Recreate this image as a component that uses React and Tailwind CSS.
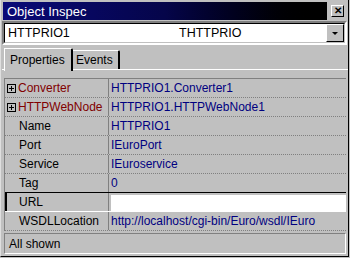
const rows = [
  { name: 'Converter', value: 'HTTPRIO1.Converter1', expand: true },
  { name: 'HTTPWebNode', value: 'HTTPRIO1.HTTPWebNode1', expand: true },
  { name: 'Name', value: 'HTTPRIO1' },
  { name: 'Port', value: 'IEuroPort' },
  { name: 'Service', value: 'IEuroservice' },
  { name: 'Tag', value: '0' },
  { name: 'URL', value: '', editing: true },
  { name: 'WSDLLocation', value: 'http://localhost/cgi-bin/Euro/wsdl/IEuro' },
]

function PlusBox() {
  return (
    <span className="relative inline-block w-[9px] h-[9px] border border-black mr-[2px] shrink-0">
      <span className="absolute left-[1px] top-[3px] w-[5px] h-[1px] bg-black" />
      <span className="absolute left-[3px] top-[1px] w-[1px] h-[5px] bg-black" />
    </span>
  )
}

function Row({ row, next }) {
  let sep = 'border-b border-dotted border-[#808080]'
  if (next && next.editing) sep = 'border-b border-solid border-black'
  if (row.editing) sep = 'border-b border-solid border-white'
  return (
    <div className={`flex h-[19px] ${sep}`}>
      <div
        className={`w-[103px] flex items-center shrink-0 ${
          row.editing ? 'border-l-2 border-black pl-[12px]' : 'pl-[2px]'
        }`}
      >
        {row.expand ? <PlusBox /> : <span className={row.editing ? 'w-[0px]' : 'w-[12px]'} />}
        <span className={row.expand ? 'text-[#800000]' : 'text-black'}>{row.name}</span>
      </div>
      <div className="w-[1px] bg-[#808080] shrink-0" />
      <div className="flex-1 flex items-center pl-[2px] text-[#000080] whitespace-nowrap overflow-hidden">
        {row.editing ? <div className="w-full h-[16px] mt-[1px] bg-white" /> : row.value}
      </div>
    </div>
  )
}

export default function App() {
  return (
    <div className="w-[350px] h-[258px] bg-[#c0c0c0] overflow-hidden">
      <div className="w-[349px] h-[257px] bg-[#c0c0c0] border-l border-l-[#dfdfdf] border-r border-b border-black flex flex-col font-['Liberation_Sans',Arial,sans-serif] text-[12px] leading-none text-black">
        {/* title bar */}
        <div className="flex items-center mt-[2px] h-[18px]">
          <div className="ml-[2px] w-[324px] h-full bg-gradient-to-r from-[#0a0a78] via-[#05054a] to-black text-white text-[13px] flex items-center pl-[4px]">
            Object Inspec
          </div>
          <div className="ml-[4px] w-[13px] h-[12px] bg-[#c0c0c0] border border-t-white border-l-white border-r-black border-b-black flex items-center justify-center text-[10px] font-bold leading-none">
            ✕
          </div>
        </div>

        {/* component combo */}
        <div className="mt-[1px] ml-[1px] w-[345px] h-[24px] border-2 border-t-[#808080] border-l-[#808080] border-r-white border-b-white">
          <div className="h-full border border-t-black border-l-black border-r-[#c0c0c0] border-b-[#c0c0c0] bg-white flex items-center text-[12.5px]">
            <span className="pl-[3px] w-[174px]">HTTPRIO1</span>
            <span className="flex-1">THTTPRIO</span>
            <div className="w-[18px] h-full bg-[#c0c0c0] border border-t-white border-l-white border-r-black border-b-black flex items-center justify-center">
              <span className="w-0 h-0 border-l-[3px] border-r-[3px] border-t-[3px] border-l-transparent border-r-transparent border-t-black" />
            </div>
          </div>
        </div>

        {/* tabs */}
        <div className="flex items-end h-[25px] ml-[1px] w-[346px] relative">
          <div className="absolute left-0 right-0 bottom-0 h-[1px] bg-white" />
          <div className="relative z-10 ml-[2px] w-[69px] h-[23px] bg-[#c0c0c0] border-l border-t border-white border-r-2 border-r-black rounded-tr-[2px] flex items-center pl-[5px] -mb-[1px]">
            Properties
          </div>
          <div className="w-[47px] h-[19px] bg-[#c0c0c0] border-t border-t-white border-r-2 border-r-black rounded-tr-[2px] flex items-center pl-[3px] mb-[1px]">
            Events
          </div>
        </div>

        {/* grid */}
        <div className="mt-[8px] ml-[3px] w-[342px] border-t border-l border-[#808080]">
          {rows.map((row, i) => (
            <Row key={row.name} row={row} next={rows[i + 1]} />
          ))}
        </div>

        {/* status */}
        <div className="mt-[2px] ml-[3px] w-[342px] h-[21px] border border-t-[#808080] border-l-[#808080] border-r-white border-b-white flex items-center pl-[4px]">
          All shown
        </div>
      </div>
    </div>
  )
}
